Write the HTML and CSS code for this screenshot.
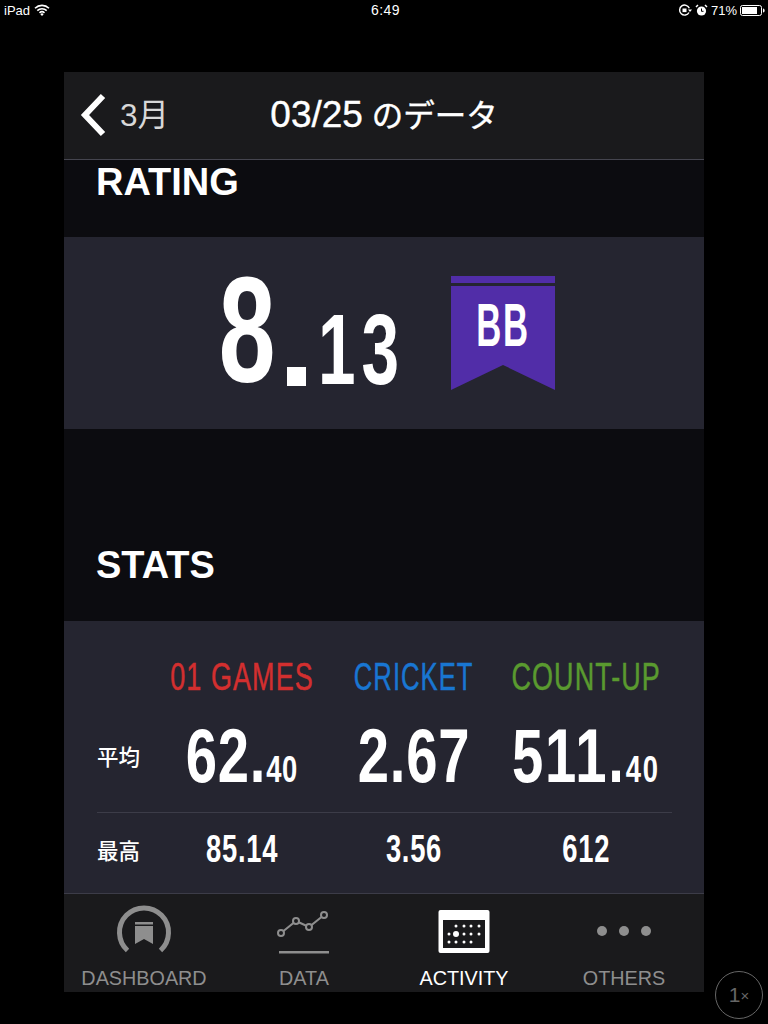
FILE: index.html
```html
<!DOCTYPE html>
<html lang="ja">
<head>
<meta charset="utf-8">
<title>03/25 のデータ</title>
<link rel="stylesheet" href="styles.css">
</head>
<body>
<div class="status">
  <div class="status-left">
    <span>iPad</span>
    <svg class="wifi" width="16" height="12" viewBox="0 0 16 12"><path d="M1 4.2a10 10 0 0 1 14 0M3.3 6.6a6.8 6.8 0 0 1 9.4 0M5.500 8.800a3.600 3.600 0 0 1 5 0" fill="none" stroke="#fff" stroke-width="1.600"/><path d="M8 12l-1.600-1.800a2.200 2.200 0 0 1 3.200 0z" fill="#fff"/></svg>
  </div>
  <div class="status-time">6:49</div>
  <div class="status-right">
    <svg width="14" height="14" viewBox="0 0 14 14"><path d="M11.300 5.300A5 5 0 1 0 11 9.500" fill="none" stroke="#fff" stroke-width="1.400"/><rect x="4.500" y="5.500" width="4" height="3.600" fill="#fff"/><path d="M10 6.500h4l-2 2.500z" fill="#fff"/></svg>
    <svg width="13" height="13" viewBox="0 0 13 13"><circle cx="6.500" cy="7" r="4.600" fill="#fff"/><path d="M1 3l2-2M12 3l-2-2" stroke="#fff" stroke-width="1.500"/><path d="M6.500 4.500v2.800h2" stroke="#000" fill="none"/></svg>
    <span>71%</span>
    <svg width="25" height="11" viewBox="0 0 25 11"><rect x=".5" y=".5" width="21" height="10" rx="2" fill="none" stroke="#fff"/><rect x="2" y="2" width="15" height="7" fill="#fff"/><path d="M23 3.500c1.200 0 1.600 1 1.600 2s-.4 2-1.600 2z" fill="#fff"/></svg>
  </div>
</div>

<main class="frame">
  <header class="nav">
    <div class="back">
      <svg width="27" height="44" viewBox="0 0 27 44"><path d="M23 3L5 22l18 19" fill="none" stroke="#fff" stroke-width="6"/></svg>
      <span class="back-label">3月</span>
    </div>
    <h1 class="nav-title"><span class="nav-date">03/25</span> のデータ</h1>
  </header>

  <div class="content">
    <h2 class="section-title rating-title">RATING</h2>
    <section class="panel rating">
      <span class="score-big din">8</span>
      <span class="score-dot"></span>
      <span class="score-small din">13</span>
      <div class="badge">
        <svg width="104" height="114" viewBox="0 0 104 114"><rect width="104" height="7" fill="#512da8"/><path d="M0 10h104v104L52 89 0 114z" fill="#512da8"/></svg>
        <span class="badge-text din">BB</span>
      </div>
    </section>

    <h2 class="section-title stats-title">STATS</h2>
    <section class="panel stats">
      <div class="stats-grid heads">
        <span></span>
        <span class="head red din">01 GAMES</span>
        <span class="head blue din">CRICKET</span>
        <span class="head green din">COUNT-UP</span>
      </div>
      <div class="stats-grid avg">
        <span class="row-label">平均</span>
        <span class="avg-val din">62.<small>40</small></span>
        <span class="avg-val din">2.67</span>
        <span class="avg-val wide din">511.<small>40</small></span>
      </div>
      <div class="stats-grid max">
        <span class="row-label">最高</span>
        <span class="max-val din">85.14</span>
        <span class="max-val din">3.56</span>
        <span class="max-val din">612</span>
      </div>
    </section>
  </div>

  <nav class="tabs">
    <div class="tab">
      <svg width="60" height="50" viewBox="0 0 60 50"><path d="M13.500 45.500a24.500 24.500 0 1 1 33 0" fill="none" stroke="#8e8e8e" stroke-width="5"/><rect x="21" y="17" width="18" height="2.500" fill="#8e8e8e"/><path d="M21 21h18v18l-9-5-9 5z" fill="#8e8e8e"/></svg>
      <span>DASHBOARD</span>
    </div>
    <div class="tab">
      <svg width="60" height="50" viewBox="0 0 60 50"><path d="M7 28l15-12 13 6 15-12" fill="none" stroke="#8e8e8e" stroke-width="2"/><g fill="#1a1a1c" stroke="#8e8e8e" stroke-width="2"><circle cx="7" cy="28" r="3"/><circle cx="22" cy="16" r="3"/><circle cx="35" cy="22" r="3"/><circle cx="50" cy="10" r="3"/></g><rect x="5" y="46" width="50" height="2.500" fill="#8e8e8e"/></svg>
      <span>DATA</span>
    </div>
    <div class="tab active">
      <svg width="60" height="50" viewBox="0 0 60 50"><rect x="4.500" y="5" width="51" height="43" rx="2" fill="#fff"/><rect x="9" y="15" width="42" height="28" fill="#1a1a1c"/><g fill="#fff"><circle cx="22" cy="21" r="1.500"/><circle cx="30" cy="21" r="1.500"/><circle cx="37" cy="21" r="1.500"/><circle cx="45" cy="21" r="1.500"/><circle cx="15" cy="29" r="1.500"/><circle cx="22" cy="29" r="3"/><circle cx="30" cy="29" r="1.500"/><circle cx="37" cy="29" r="1.500"/><circle cx="45" cy="29" r="1.500"/><circle cx="15" cy="37" r="1.500"/><circle cx="22" cy="37" r="1.500"/><circle cx="30" cy="37" r="1.500"/><circle cx="37" cy="37" r="1.500"/></g></svg>
      <span>ACTIVITY</span>
    </div>
    <div class="tab">
      <svg width="60" height="50" viewBox="0 0 60 50"><g fill="#8e8e8e"><circle cx="8" cy="26" r="5"/><circle cx="30" cy="26" r="5"/><circle cx="52" cy="26" r="5"/></g></svg>
      <span>OTHERS</span>
    </div>
  </nav>
</main>
<div class="zoom-btn">1<span>×</span></div>
</body>
</html>
```
FILE: styles.css
```css
* { box-sizing: border-box; margin: 0; padding: 0; }
html, body { background: #000; }
body {
  position: relative;
  width: 768px;
  height: 1024px;
  overflow: hidden;
  color: #fff;
  font-family: "Liberation Sans", "Noto Sans CJK JP", sans-serif;
}
.din { font-family: "Liberation Sans", sans-serif; font-weight: 700; white-space: nowrap; }

.status {
  height: 20px;
  display: grid;
  grid-template-columns: 1fr auto 1fr;
  align-items: center;
  padding: 0 3px 0 4px;
  font-size: 13px;
}
.status-left { display: flex; align-items: center; gap: 4px; }
.status-right { display: flex; align-items: center; justify-content: flex-end; gap: 3px; }
.status-time { font-size: 14px; letter-spacing: .4px; padding-left: 2px; }

.frame { width: 640px; height: 920px; margin: 52px auto 0; display: flex; flex-direction: column; }

.nav {
  position: relative;
  height: 88px;
  flex: none;
  background: #1a1a1c;
  border-bottom: 1px solid #45454f;
  display: flex;
  align-items: center;
  justify-content: center;
}
.back { position: absolute; left: 16px; top: 21px; display: flex; align-items: center; gap: 13px; }
.back-label { font-size: 31.5px; line-height: 40px; color: #d8d8d8; }
.nav-title { font-size: 31.5px; font-weight: 400; line-height: 40px; -webkit-text-stroke: .4px #fff; }
.nav-date { font-size: 37px; }

.content { flex: 1; background: #0c0c10; overflow: hidden; display: flex; flex-direction: column; }
.section-title { font-size: 38px; font-weight: 700; line-height: 44px; padding-left: 32px; }
.rating-title { height: 77px; }
.stats-title { margin-top: 114px; height: 78px; }

.panel { background: #252530; flex: none; }
.rating { height: 192px; display: flex; align-items: flex-end; padding: 0 0 42px 157px; }
.score-big { font-size: 151px; line-height: 114px; height: 114px; width: 52px; display: flex; justify-content: center; transform: scaleX(.675); }
.score-dot { width: 19px; height: 19px; background: #fff; margin: 0 12px 1px 14px; }
.score-small { font-size: 100px; line-height: 76px; height: 76px; width: 80px; letter-spacing: 9px; transform: scaleX(.675); transform-origin: left; }
.badge { position: relative; width: 104px; height: 114px; margin: 0 0 -3px 53px; }
.badge svg { display: block; }
.badge-text { position: absolute; top: 18px; left: 0; right: 0; display: flex; justify-content: center; font-size: 62px; line-height: 62px; letter-spacing: 3px; transform: scaleX(.56); }

.stats { height: 272px; padding: 0 32px 0 33px; }
.stats-grid { display: grid; grid-template-columns: 59px repeat(3, 172px); align-items: center; justify-items: center; }
.heads { height: 100px; padding-top: 12px; }
.head { font-size: 38px; font-weight: 400; letter-spacing: 1.5px; transform: scaleX(.71); -webkit-text-stroke: .5px currentColor; }
.red { color: #d32f2f; }
.blue { color: #1976d2; transform: scaleX(.675); }
.green { color: #5a9a2f; }
.avg { height: 92px; padding-bottom: 22px; border-bottom: 1px solid #3c3c48; grid-template-rows: 69px; }
.row-label { justify-self: start; font-size: 21.5px; font-weight: 500; white-space: nowrap; font-family: "Noto Sans CJK JP", sans-serif; }
.avg-val { font-size: 76px; line-height: 69px; letter-spacing: 1px; transform: scaleX(.74); }
.avg-val.wide { letter-spacing: 2.500px; }
.avg-val small { font-size: 37px; line-height: 0; }
.max { height: 72px; }
.max-val { font-size: 38px; letter-spacing: 1px; transform: scaleX(.72); }

.tabs { height: 99px; flex: none; background: #1a1a1c; display: grid; grid-template-columns: repeat(4, 1fr); border-top: 1px solid #3c3c48; }
.tab { display: flex; flex-direction: column; align-items: center; padding-top: 11px; color: #8e8e8e; font-size: 19.8px; line-height: 24px; }
.tab svg { display: block; margin-bottom: 11px; }
.tab.active { color: #fff; }

.zoom-btn {
  position: absolute;
  left: 715px;
  top: 971px;
  width: 48px;
  height: 48px;
  border: 1px solid #666;
  border-radius: 50%;
  display: flex;
  align-items: center;
  justify-content: center;
  color: #666;
  font-size: 21px;
}
.zoom-btn span { font-size: 15px; }
```
